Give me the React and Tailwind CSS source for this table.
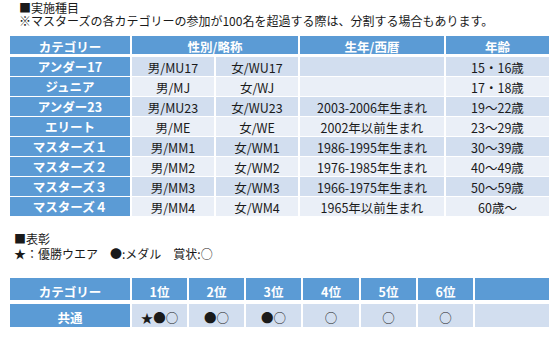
import React from "react";

const font = { fontFamily: '"Noto Sans CJK JP", "Noto Sans", sans-serif' };

const rows = [
  ["アンダー17", "男/MU17", "女/WU17", "", "15・16歳"],
  ["ジュニア", "男/MJ", "女/WJ", "", "17・18歳"],
  ["アンダー23", "男/MU23", "女/WU23", "2003-2006年生まれ", "19～22歳"],
  ["エリート", "男/ME", "女/WE", "2002年以前生まれ", "23～29歳"],
  ["マスターズ１", "男/MM1", "女/WM1", "1986-1995年生まれ", "30～39歳"],
  ["マスターズ２", "男/MM2", "女/WM2", "1976-1985年生まれ", "40～49歳"],
  ["マスターズ３", "男/MM3", "女/WM3", "1966-1975年生まれ", "50～59歳"],
  ["マスターズ４", "男/MM4", "女/WM4", "1965年以前生まれ", "60歳～"],
];

export default function App() {
  return (
    <div
      className="w-[558px] h-[339px] bg-white text-[#1a1a1a] overflow-hidden text-[12px] leading-[13px]"
      style={font}
    >
      <div className="pl-[19px] pt-[2px]">
        <div className="leading-[12px]">■実施種目</div>
        <div className="leading-[13px]">
          ※マスターズの各カテゴリーの参加が100名を超過する際は、分割する場合もあります。
        </div>
      </div>

      <div className="ml-[10px] mt-[9px] w-[539px] text-[12.5px]">
        <div className="grid grid-cols-[120px_166px_144px_103px] gap-x-[2px] h-[18px]">
          {["カテゴリー", "性別/略称", "生年/西暦", "年齢"].map((t) => (
            <div
              key={t}
              className="bg-[#5b9bd5] text-white font-bold flex items-center justify-center pt-[2px]"
            >
              {t}
            </div>
          ))}
        </div>
        <div className="mt-[3px] flex flex-col gap-y-[1px]">
          {rows.map((r, i) => {
            const bg = i % 2 === 0 ? "bg-[#d2deef]" : "bg-[#eaeff7]";
            return (
              <div
                key={i}
                className="grid grid-cols-[120px_82px_82px_144px_103px] gap-x-[2px] h-[19px]"
              >
                <div className="bg-[#5b9bd5] text-white font-bold flex items-center justify-center">
                  {r[0]}
                </div>
                {r.slice(1).map((c, j) => (
                  <div
                    key={j}
                    className={`${bg} flex items-center justify-center pt-[1px]`}
                  >
                    {c}
                  </div>
                ))}
              </div>
            );
          })}
        </div>
      </div>

      <div className="pl-[14px] mt-[16px]">
        <div className="leading-[14px]">■表彰</div>
        <div className="leading-[14px] mt-[1px] flex">
          <span>★：優勝ウエア</span>
          <span className="ml-[12px]">●:メダル</span>
          <span className="ml-[12px]">賞状:○</span>
        </div>
      </div>

      <div className="ml-[10px] mt-[17px] w-[539px] text-[12.5px]">
        <div className="grid grid-cols-[120px_55px_55px_55px_56px_55px_55px_1fr] gap-x-[2px] h-[22px]">
          {["カテゴリー", "1位", "2位", "3位", "4位", "5位", "6位", ""].map((t, i) => (
            <div
              key={i}
              className="bg-[#5b9bd5] text-white font-bold flex items-end justify-center pb-[2px]"
            >
              {t}
            </div>
          ))}
        </div>
        <div className="mt-[4px] grid grid-cols-[120px_55px_55px_55px_56px_55px_55px_1fr] gap-x-[2px] h-[23px]">
          <div className="bg-[#5b9bd5] text-white font-bold flex items-end justify-center pb-[3px]">
            共通
          </div>
          {["★●○", "●○", "●○", "○", "○", "○", ""].map((t, i) => (
            <div
              key={i}
              className="bg-[#d2deef] flex items-end justify-center pb-[3px]"
            >
              {t}
            </div>
          ))}
        </div>
      </div>
    </div>
  );
}
